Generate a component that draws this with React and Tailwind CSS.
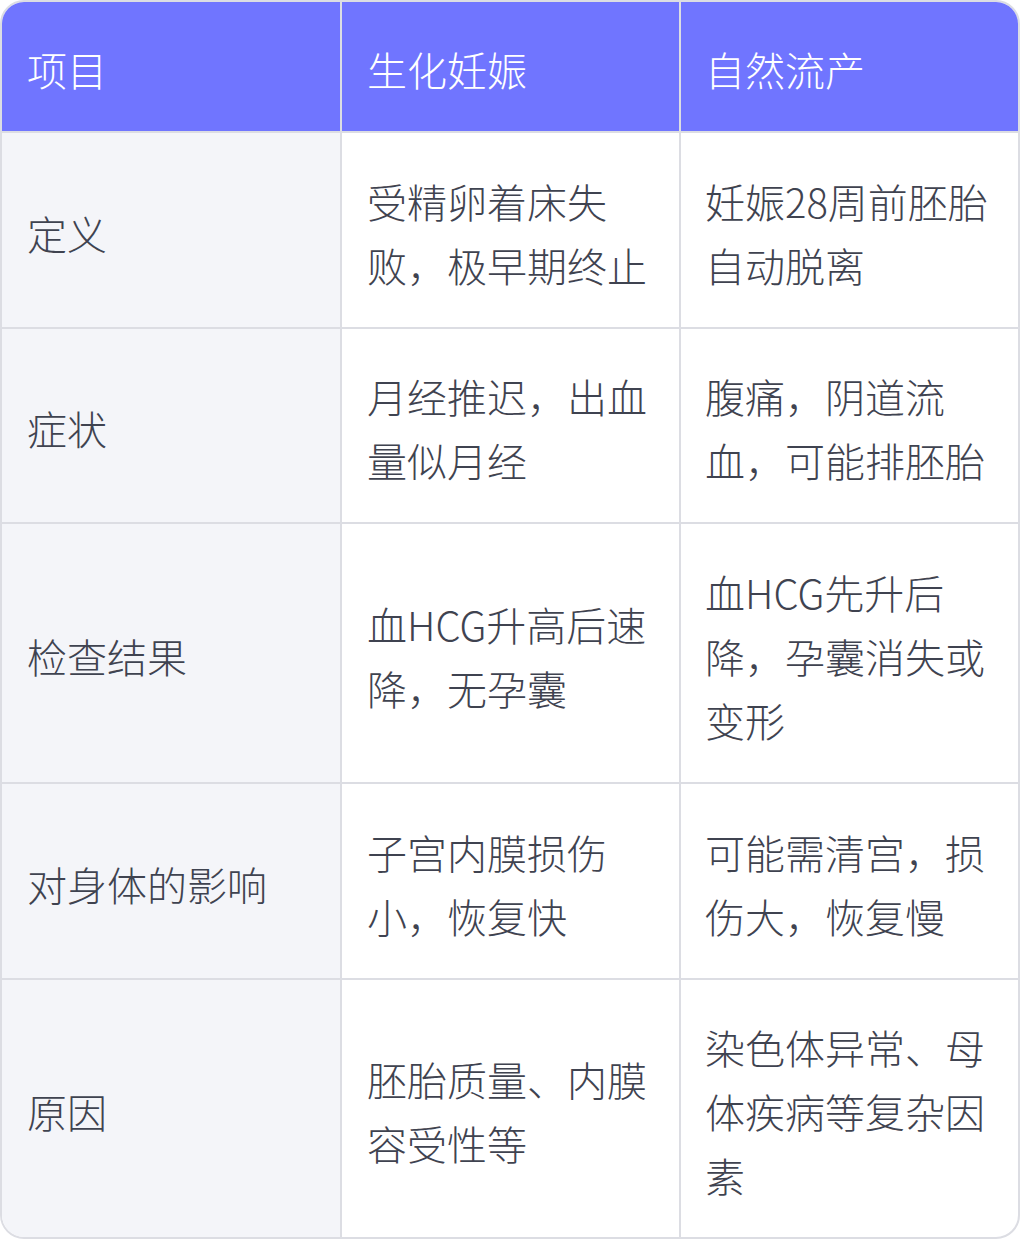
import React from 'react';

const rows = [
  ['定义', '受精卵着床失败，极早期终止', '妊娠28周前胚胎自动脱离', true],
  ['症状', '月经推迟，出血量似月经', '腹痛，阴道流血，可能排胚胎', false],
  ['检查结果', '血HCG升高后速降，无孕囊', '血HCG先升后降，孕囊消失或变形', true],
  ['对身体的影响', '子宫内膜损伤小，恢复快', '可能需清宫，损伤大，恢复慢', true],
  ['原因', '胚胎质量、内膜容受性等', '染色体异常、母体疾病等复杂因素', false],
];

export default function App() {
  return (
    <div
      className="w-[1020px] bg-white"
      style={{ fontFamily: '"Noto Sans CJK SC", "Noto Sans", sans-serif' }}>
      <div className="overflow-hidden rounded-[24px] border-2 border-[#dcdde3] text-[40px] leading-[64px] font-light">
        <div className="grid grid-cols-[340px_339px_1fr] bg-[#7075ff] text-white border-b-2 border-[#dcdde3]">
          <div className="px-[25px] pt-[35px] pb-[30px] border-r-2 border-[#dcdde3]">项目</div>
          <div className="px-[25px] pt-[35px] pb-[30px] border-r-2 border-[#dcdde3]">生化妊娠</div>
          <div className="px-[24px] pt-[35px] pb-[30px]">自然流产</div>
        </div>
        {rows.map((r, i) => {
          const pad = r[3] ? 'pt-[36px] pb-[30px]' : 'pt-[35px] pb-[30px]';
          return (
            <div
              key={r[0]}
              className={
                'grid grid-cols-[340px_339px_1fr] text-[#3f4350] ' +
                (i < rows.length - 1 ? 'border-b-2 border-[#dcdde3]' : '')
              }>
              <div className={'flex items-center bg-[#f4f5f9] px-[25px] border-r-2 border-[#dcdde3] ' + pad}>
                {r[0]}
              </div>
              <div className={'flex items-center px-[25px] border-r-2 border-[#dcdde3] ' + pad}>
                <span>{r[1]}</span>
              </div>
              <div className={'flex items-center px-[24px] ' + pad}>
                <span>{r[2]}</span>
              </div>
            </div>
          );
        })}
      </div>
    </div>
  );
}
